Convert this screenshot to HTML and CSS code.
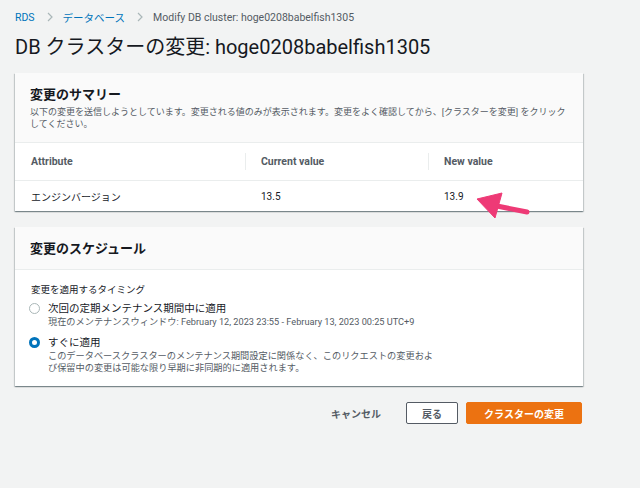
FILE: index.html
```html
<!DOCTYPE html>
<html lang="ja">
<head>
    <meta charset="UTF-8">
    <meta name="viewport" content="width=device-width, initial-scale=1.0">
    <title>DB クラスターの変更</title>
    <link rel="stylesheet" href="styles.css">
</head>
<body>
    <div class="page">
        <nav class="breadcrumb">
            <a href="#">RDS</a>
            <svg class="chevron" viewBox="0 0 6 10" width="6" height="10"><polyline points="1,1 5,5 1,9" /></svg>
            <a href="#">データベース</a>
            <svg class="chevron" viewBox="0 0 6 10" width="6" height="10"><polyline points="1,1 5,5 1,9" /></svg>
            <span class="current">Modify DB cluster: hoge0208babelfish1305</span>
        </nav>

        <h1>DB クラスターの変更: hoge0208babelfish1305</h1>

        <section class="card">
            <div class="card-header">
                <h2>変更のサマリー</h2>
                <p class="card-desc">以下の変更を送信しようとしています。変更される値のみが表示されます。変更をよく確認してから、[クラスターを変更] をクリックしてください。</p>
            </div>
            <table class="summary">
                <thead>
                    <tr>
                        <th>Attribute</th>
                        <th>Current value</th>
                        <th>New value</th>
                    </tr>
                </thead>
                <tbody>
                    <tr>
                        <td>エンジンバージョン</td>
                        <td>13.5</td>
                        <td>13.9</td>
                    </tr>
                </tbody>
            </table>
        </section>

        <section class="card">
            <div class="card-header">
                <h2>変更のスケジュール</h2>
            </div>
            <div class="card-body">
                <div class="field-label">変更を適用するタイミング</div>
                <label class="radio">
                    <span class="radio-dot"></span>
                    <span class="radio-text">
                        <span class="radio-title">次回の定期メンテナンス期間中に適用</span>
                        <span class="radio-desc">現在のメンテナンスウィンドウ: February 12, 2023 23:55 - February 13, 2023 00:25 UTC+9</span>
                    </span>
                </label>
                <label class="radio">
                    <span class="radio-dot checked"></span>
                    <span class="radio-text">
                        <span class="radio-title">すぐに適用</span>
                        <span class="radio-desc narrow">このデータベースクラスターのメンテナンス期間設定に関係なく、このリクエストの変更および保留中の変更は可能な限り早期に非同期的に適用されます。</span>
                    </span>
                </label>
            </div>
        </section>

        <div class="actions">
            <button class="btn btn-link">キャンセル</button>
            <button class="btn btn-normal">戻る</button>
            <button class="btn btn-primary">クラスターの変更</button>
        </div>
    </div>

    <svg class="annotation" viewBox="0 0 64 34" width="64" height="34">
        <line x1="22" y1="17" x2="57" y2="24" stroke="#ee3a76" stroke-width="5" stroke-linecap="round" />
        <polygon points="7,11 32,5 25,30" fill="#ee3a76" stroke="#ee3a76" stroke-width="1" stroke-linejoin="round" />
    </svg>
</body>
</html>
```

FILE: styles.css
```css
:root {
    --bg-color: #f2f3f3;
    --text-color: #16191f;
    --muted-color: #545b64;
    --link-color: #0073bb;
    --border-color: #eaeded;
    --orange: #ec7211;
}

body {
    margin: 0;
    background-color: var(--bg-color);
    color: var(--text-color);
    font-family: Roboto, "Noto Sans CJK JP", sans-serif;
}

.page {
    width: 568px;
    padding: 10px 0 0 15px;
}

.breadcrumb {
    display: flex;
    align-items: center;
    height: 14px;
    font-size: 10.5px;
}

.breadcrumb a {
    color: var(--link-color);
    text-decoration: none;
}

.breadcrumb .chevron {
    margin: 0 10px 0 12px;
    fill: none;
    stroke: #aab7b8;
    stroke-width: 1.2;
}

.breadcrumb .current {
    color: var(--muted-color);
}

h1 {
    margin: 10px 0 13px;
    font-size: 20px;
    font-weight: 400;
    line-height: 26px;
}

.card {
    background: white;
    box-shadow: 0 1px 1px 0 rgba(0, 28, 36, 0.3), 1px 1px 1px 0 rgba(0, 28, 36, 0.15), -1px 1px 1px 0 rgba(0, 28, 36, 0.15);
    margin-bottom: 16px;
}

.card-header {
    background: #fafafa;
    border-bottom: 1px solid var(--border-color);
    padding: 14px 15px 12px;
}

.card-header h2 {
    margin: 0;
    font-size: 13px;
    font-weight: 700;
    line-height: 16px;
}

.card-desc {
    margin: 3px 0 0;
    font-size: 9px;
    line-height: 12px;
    color: var(--muted-color);
}

.summary {
    width: 100%;
    border-collapse: collapse;
}

.summary th {
    height: 37px;
    padding: 0 16px;
    text-align: left;
    font-size: 10.5px;
    font-weight: 700;
    color: var(--muted-color);
    border-bottom: 1px solid var(--border-color);
    position: relative;
}

.summary th + th::before {
    content: "";
    position: absolute;
    left: 0;
    top: 10px;
    height: 17px;
    border-left: 1px solid var(--border-color);
}

.summary th:nth-child(1) { width: 198px; }
.summary th:nth-child(2) { width: 151px; }

.summary td {
    height: 30px;
    padding: 0 16px;
    font-size: 10px;
}

.card-body {
    padding: 14px 16px 12px;
}

.field-label {
    font-size: 9.5px;
    line-height: 12px;
    margin-bottom: 6px;
}

.radio {
    display: flex;
    gap: 8px;
    margin-bottom: 8px;
}

.radio:last-child {
    margin-bottom: 0;
}

.radio-dot {
    flex: none;
    box-sizing: border-box;
    width: 11px;
    height: 11px;
    margin: 1px 0 0 -2px;
    border: 1.5px solid #aab7b8;
    border-radius: 50%;
    background: white;
}

.radio-dot.checked {
    border: 3.5px solid var(--link-color);
}

.radio-text {
    display: flex;
    flex-direction: column;
}

.radio-title {
    font-size: 10.5px;
    line-height: 14px;
}

.radio-desc {
    font-size: 9.2px;
    line-height: 12px;
    color: var(--muted-color);
}

.radio-desc.narrow {
    max-width: 392px;
}

.actions {
    display: flex;
    justify-content: flex-end;
    align-items: center;
    gap: 8px;
    margin-right: 1px;
}

.btn {
    height: 22px;
    padding: 0 13px;
    font-family: inherit;
    font-size: 10px;
    font-weight: 700;
    border: 1px solid transparent;
    border-radius: 2px;
    cursor: pointer;
}

.btn-link {
    background: none;
    color: var(--muted-color);
    margin-right: 3px;
}

.btn-normal {
    background: white;
    color: var(--muted-color);
    border-color: var(--muted-color);
    width: 52px;
}

.btn-primary {
    background: var(--orange);
    color: white;
    border-color: var(--orange);
    width: 116px;
}

.annotation {
    position: absolute;
    left: 470px;
    top: 188px;
}
```
